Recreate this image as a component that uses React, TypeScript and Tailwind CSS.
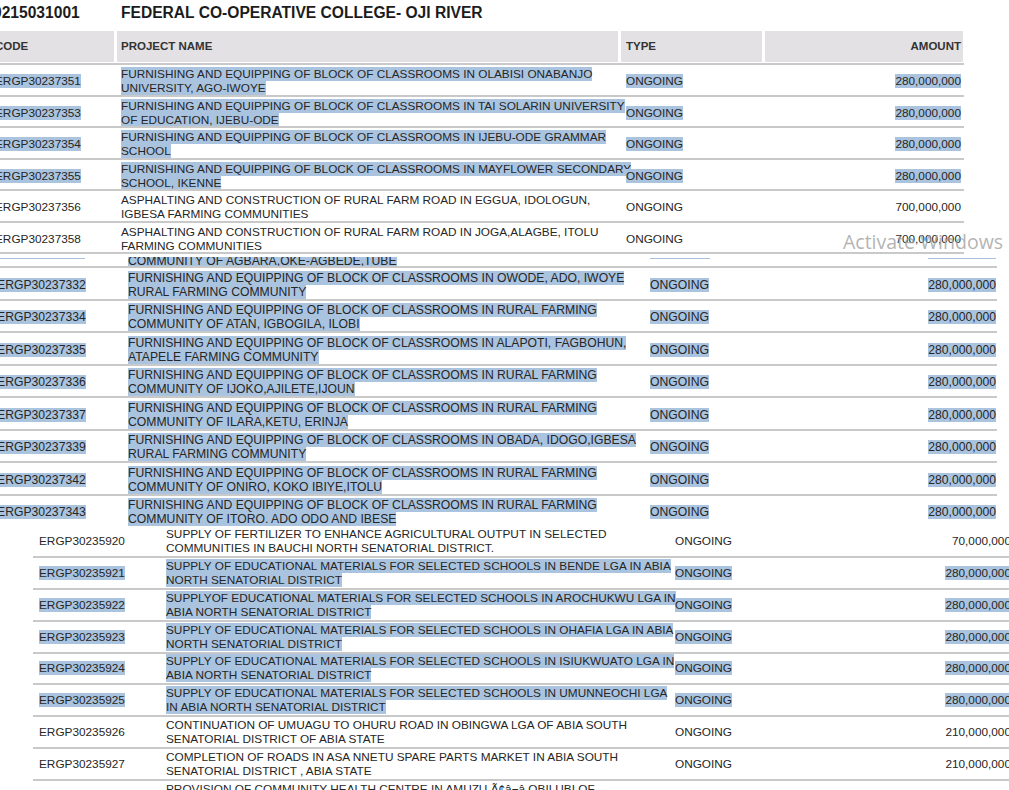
import React from "react";

type Row = [string, string, string, string, boolean];

const FURN = "FURNISHING AND EQUIPPING OF BLOCK OF CLASSROOMS IN ";

const sec1: Row[] = [
  ["ERGP30237351", FURN + "OLABISI ONABANJO", "UNIVERSITY, AGO-IWOYE", "280,000,000", true],
  ["ERGP30237353", FURN + "TAI SOLARIN UNIVERSITY", "OF EDUCATION, IJEBU-ODE", "280,000,000", true],
  ["ERGP30237354", FURN + "IJEBU-ODE GRAMMAR", "SCHOOL", "280,000,000", true],
  ["ERGP30237355", FURN + "MAYFLOWER SECONDARY", "SCHOOL, IKENNE", "280,000,000", true],
  ["ERGP30237356", "ASPHALTING AND CONSTRUCTION OF RURAL FARM ROAD IN EGGUA, IDOLOGUN,", "IGBESA FARMING COMMUNITIES", "700,000,000", false],
  ["ERGP30237358", "ASPHALTING AND CONSTRUCTION OF RURAL FARM ROAD IN JOGA,ALAGBE, ITOLU", "FARMING COMMUNITIES", "700,000,000", false],
];

const sec2: Row[] = [
  ["ERGP30237332", FURN + "OWODE, ADO, IWOYE", "RURAL FARMING COMMUNITY", "280,000,000", true],
  ["ERGP30237334", FURN + "RURAL FARMING", "COMMUNITY OF ATAN, IGBOGILA, ILOBI", "280,000,000", true],
  ["ERGP30237335", FURN + "ALAPOTI, FAGBOHUN,", "ATAPELE FARMING COMMUNITY", "280,000,000", true],
  ["ERGP30237336", FURN + "RURAL FARMING", "COMMUNITY OF IJOKO,AJILETE,IJOUN", "280,000,000", true],
  ["ERGP30237337", FURN + "RURAL FARMING", "COMMUNITY OF ILARA,KETU, ERINJA", "280,000,000", true],
  ["ERGP30237339", FURN + "OBADA, IDOGO,IGBESA", "RURAL FARMING COMMUNITY", "280,000,000", true],
  ["ERGP30237342", FURN + "RURAL FARMING", "COMMUNITY OF ONIRO, KOKO IBIYE,ITOLU", "280,000,000", true],
  ["ERGP30237343", FURN + "RURAL FARMING", "COMMUNITY OF ITORO. ADO ODO AND IBESE", "280,000,000", true],
];

const sec3: Row[] = [
  ["ERGP30235920", "SUPPLY OF FERTILIZER TO ENHANCE AGRICULTURAL OUTPUT IN SELECTED", "COMMUNITIES IN BAUCHI NORTH SENATORIAL DISTRICT.", "70,000,000", false],
  ["ERGP30235921", "SUPPLY OF EDUCATIONAL MATERIALS FOR SELECTED SCHOOLS IN BENDE LGA IN ABIA", "NORTH SENATORIAL DISTRICT", "280,000,000", true],
  ["ERGP30235922", "SUPPLYOF EDUCATIONAL MATERIALS FOR SELECTED SCHOOLS IN AROCHUKWU LGA IN", "ABIA NORTH SENATORIAL DISTRICT", "280,000,000", true],
  ["ERGP30235923", "SUPPLY OF EDUCATIONAL MATERIALS FOR SELECTED SCHOOLS IN OHAFIA LGA IN ABIA", "NORTH SENATORIAL DISTRICT", "280,000,000", true],
  ["ERGP30235924", "SUPPLY OF EDUCATIONAL MATERIALS FOR SELECTED SCHOOLS IN ISIUKWUATO LGA IN", "ABIA NORTH SENATORIAL DISTRICT", "280,000,000", true],
  ["ERGP30235925", "SUPPLY OF EDUCATIONAL MATERIALS FOR SELECTED SCHOOLS IN UMUNNEOCHI LGA", "IN ABIA NORTH SENATORIAL DISTRICT", "280,000,000", true],
  ["ERGP30235926", "CONTINUATION OF UMUAGU TO OHURU ROAD IN OBINGWA LGA OF ABIA SOUTH", "SENATORIAL DISTRICT OF ABIA STATE", "210,000,000", false],
  ["ERGP30235927", "COMPLETION OF ROADS IN ASA NNETU SPARE PARTS MARKET IN ABIA SOUTH", "SENATORIAL DISTRICT , ABIA STATE", "210,000,000", false],
];

function T({ hl, children }: { hl: boolean; children: React.ReactNode }) {
  return <span className={hl ? "bg-[#aac4e0]" : ""}>{children}</span>;
}

function Row1({ r }: { r: Row }) {
  const [code, l1, l2, amt, hl] = r;
  return (
    <>
      <div className="flex h-[29.5px] shrink-0 items-center pt-[3px] ml-[-6px] text-[11.8px] leading-[14px] whitespace-nowrap">
        <div className="w-[127px] shrink-0 pl-[1px]"><T hl={hl}>{code}</T></div>
        <div className="w-[505px] shrink-0">
          <div><T hl={hl}>{l1}</T></div>
          <div><T hl={hl}>{l2}</T></div>
        </div>
        <div className="w-[137px] shrink-0"><T hl={hl}>ONGOING</T></div>
        <div className="w-[200px] shrink-0 pr-[2px] text-right"><T hl={hl}>{amt}</T></div>
      </div>
      <div className="h-[2px] w-[964px] shrink-0 bg-[#c9c9c9]" />
    </>
  );
}

function Row2({ r }: { r: Row }) {
  const [code, l1, l2, amt, hl] = r;
  return (
    <>
      <div className="flex h-[30.5px] shrink-0 items-center pt-[3px] ml-[-4px] text-[12.2px] leading-[14px] whitespace-nowrap">
        <div className="w-[132px] shrink-0 pl-[1px]"><T hl={hl}>{code}</T></div>
        <div className="w-[522px] shrink-0">
          <div><T hl={hl}>{l1}</T></div>
          <div><T hl={hl}>{l2}</T></div>
        </div>
        <div className="w-[146px] shrink-0"><T hl={hl}>ONGOING</T></div>
        <div className="w-[200px] shrink-0 text-right"><T hl={hl}>{amt}</T></div>
      </div>
      <div className="h-[2px] w-[997px] shrink-0 bg-[#c9c9c9]" />
    </>
  );
}

function Row3({ r, first }: { r: Row; first?: boolean }) {
  const [code, l1, l2, amt, hl] = r;
  return (
    <>
      <div
        className={
          (first ? "h-[30px] " : "h-[29.85px] ") +
          "flex shrink-0 items-center ml-[33px] text-[11.8px] leading-[14px] whitespace-nowrap"
        }
      >
        <div className="w-[133px] shrink-0 pl-[6px]"><T hl={hl}>{code}</T></div>
        <div className="w-[509px] shrink-0">
          <div><T hl={hl}>{l1}</T></div>
          <div><T hl={hl}>{l2}</T></div>
        </div>
        <div className="w-[136px] shrink-0"><T hl={hl}>ONGOING</T></div>
        <div className="w-[200px] shrink-0 text-right"><T hl={hl}>{amt}</T></div>
      </div>
      <div className="ml-[33px] h-[2px] w-[980px] shrink-0 bg-[#c9c9c9]" />
    </>
  );
}

export default function App() {
  return (
    <div className="relative flex h-[790px] w-[1009px] flex-col overflow-hidden bg-white font-['Liberation_Sans',Arial,sans-serif] text-[#262626]">
      {/* Section 1 */}
      <div className="flex h-[257px] shrink-0 flex-col overflow-hidden">
        <div className="ml-[-7px] flex h-[31px] shrink-0 items-start whitespace-nowrap pt-[4px] text-[15.6px] font-bold leading-[18px] text-[#1c1c1c]">
          <span className="w-[128px] shrink-0">0215031001</span>
          <span>FEDERAL CO-OPERATIVE COLLEGE- OJI RIVER</span>
        </div>
        <div className="ml-[-6px] flex h-[31px] shrink-0 gap-[3px] text-[11.5px] font-bold text-[#333]">
          <div className="flex w-[120px] shrink-0 items-center bg-[#e3e1e3] pl-[1px]">CODE</div>
          <div className="flex w-[501px] shrink-0 items-center bg-[#e3e1e3] pl-[4px]">PROJECT NAME</div>
          <div className="flex w-[141px] shrink-0 items-center bg-[#e3e1e3] pl-[5px]">TYPE</div>
          <div className="flex w-[198px] shrink-0 items-center justify-end bg-[#e3e1e3] pr-[2px]">AMOUNT</div>
        </div>
        <div className="mt-[1px] h-[2px] w-[964px] shrink-0 bg-[#c9c9c9]" />
        {sec1.map((r) => (
          <Row1 key={r[0]} r={r} />
        ))}
      </div>

      {/* Section 2 */}
      <div className="flex h-[269px] shrink-0 flex-col overflow-hidden">
        <div className="ml-[-4px] flex h-[9px] shrink-0 items-start overflow-hidden whitespace-nowrap text-[12.2px] leading-[14px]">
          <div className="w-[132px] shrink-0">
            <div className="ml-[4px] mt-[1px] h-[1px] w-[85px] bg-[#a9c1dd]" />
          </div>
          <div className="mt-[-3px] w-[522px] shrink-0">
            <T hl>COMMUNITY OF AGBARA,OKE-AGBEDE,TUBE</T>
          </div>
          <div className="w-[146px] shrink-0">
            <div className="mt-[1px] h-[1px] w-[60px] bg-[#a9c1dd]" />
          </div>
          <div className="flex w-[200px] shrink-0 justify-end">
            <div className="mt-[1px] h-[1px] w-[68px] bg-[#a9c1dd]" />
          </div>
        </div>
        <div className="h-[2px] w-[997px] shrink-0 bg-[#c9c9c9]" />
        {sec2.map((r) => (
          <Row2 key={r[0]} r={r} />
        ))}
      </div>

      {/* Section 3 */}
      <div className="flex min-h-0 flex-1 flex-col overflow-hidden">
        {sec3.map((r, i) => (
          <Row3 key={r[0]} r={r} first={i === 0} />
        ))}
        <div className="ml-[33px] flex h-[30px] shrink-0 items-start whitespace-nowrap pt-[1px] text-[11.8px] leading-[14px] text-[#777]">
          <div className="w-[133px] shrink-0 pl-[6px] pt-[8px]">ERGP30235928</div>
          <div className="w-[509px] shrink-0 text-[#262626]">
            <div>PROVISION OF COMMUNITY HEALTH CENTRE IN AMUZU Ã¢â¬â OBILUBI OF</div>
            <div>UMUOBASI-UKWU, ABIA STATE</div>
          </div>
          <div className="w-[136px] shrink-0 pt-[5px]">ONGOING</div>
          <div className="w-[200px] shrink-0 pt-[5px] text-right">70,000,000</div>
        </div>
      </div>

      {/* Windows activation watermark overlay */}
      <div className="pointer-events-none absolute left-[843px] top-[229px] whitespace-nowrap font-['Open_Sans',sans-serif] text-[19.5px] leading-[26px] text-[#a0a0a0]/80">
        Activate Windows
      </div>
    </div>
  );
}
